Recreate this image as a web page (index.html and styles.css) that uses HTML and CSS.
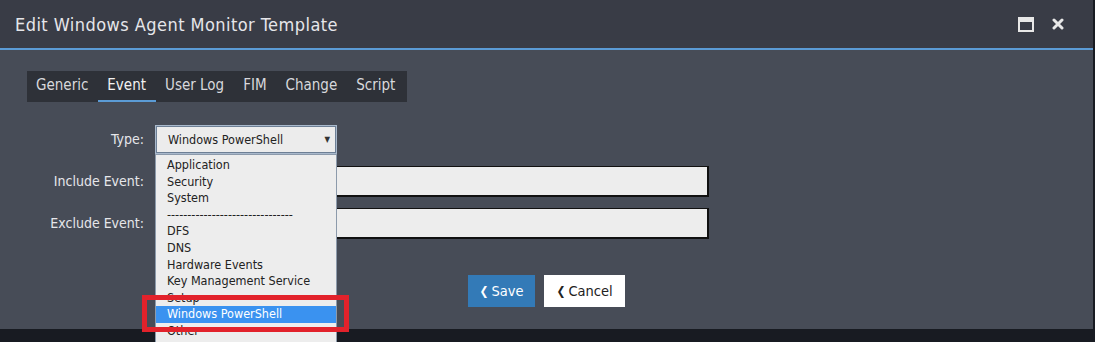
FILE: index.html
```html
<!DOCTYPE html>
<html>
<head>
<meta charset="utf-8">
<link rel="stylesheet" href="styles.css">
</head>
<body>
<div class="modal">
  <div class="modal-header">
    <h1 class="title">Edit Windows Agent Monitor Template</h1>
    <div class="header-icons">
      <svg class="icon-max" width="16" height="15" viewBox="0 0 16 15"><rect x="1" y="1" width="14" height="13" fill="none" stroke="#e8e8e8" stroke-width="2"/><rect x="1" y="1" width="14" height="4" fill="#e8e8e8"/></svg>
      <svg class="icon-close" width="12" height="12" viewBox="0 0 12 12"><path d="M2 2 L10 10 M10 2 L2 10" stroke="#e8e8e8" stroke-width="3" stroke-linecap="round"/></svg>
    </div>
  </div>
  <div class="modal-body">
    <div class="tabs">
      <div class="tab">Generic</div>
      <div class="tab active">Event</div>
      <div class="tab">User Log</div>
      <div class="tab">FIM</div>
      <div class="tab">Change</div>
      <div class="tab">Script</div>
    </div>
    <div class="form">
      <label class="label">Type:</label>
      <div class="select-wrap">
        <div class="select">Windows PowerShell<span class="arrow">▼</span></div>
        <div class="dropdown">
          <div class="opt">Application</div>
          <div class="opt">Security</div>
          <div class="opt">System</div>
          <div class="opt">-------------------------------</div>
          <div class="opt">DFS</div>
          <div class="opt">DNS</div>
          <div class="opt">Hardware Events</div>
          <div class="opt">Key Management Service</div>
          <div class="opt">Setup</div>
          <div class="opt selected">Windows PowerShell</div>
          <div class="opt">Other</div>
        </div>
        <div class="highlight-box"></div>
      </div>
      <label class="label">Include Event:</label>
      <div class="input"></div>
      <label class="label">Exclude Event:</label>
      <div class="input"></div>
    </div>
    <div class="actions">
      <button class="btn btn-save"><span class="chev">&#10094;</span>Save</button>
      <button class="btn btn-cancel"><span class="chev">&#10094;</span>Cancel</button>
    </div>
  </div>
</div>
</body>
</html>
```

FILE: styles.css
```css
html, body {
  margin: 0;
  padding: 0;
}
body {
  background: #181b22;
  width: 1095px;
  height: 342px;
  overflow: hidden;
  font-family: "DejaVu Sans Condensed", "DejaVu Sans", sans-serif;
}
.modal {
  width: 1093px;
  background: #474c57;
}
.modal-header {
  height: 48px;
  background: #393c46;
  border-bottom: 2px solid #5b9bd5;
  display: flex;
  align-items: center;
  justify-content: space-between;
  padding: 0 29px 0 15px;
  box-sizing: content-box;
}
.title {
  margin: 0;
  font-size: 18px;
  font-weight: normal;
  color: #e6e6ea;
  letter-spacing: 0.45px;
}
.header-icons {
  display: flex;
  align-items: center;
  gap: 18px;
}
.modal-body {
  height: 279px;
  padding: 21px 0 0 27px;
  box-sizing: border-box;
  position: relative;
}
.tabs {
  display: inline-flex;
  background: #2e3138;
  height: 31px;
  padding-right: 2px;
}
.tab {
  padding: 0 10px 0 9px;
  line-height: 29px;
  font-size: 15px;
  color: #d8d8dc;
  border-bottom: 2px solid transparent;
}
.tab.active {
  color: #f2f2f2;
  border-bottom-color: #5b9bd5;
}
.form {
  display: grid;
  grid-template-columns: 117px 554px;
  column-gap: 11px;
  row-gap: 11px;
  margin-top: 23px;
  align-items: center;
}
.label {
  text-align: right;
  font-size: 14px;
  color: #e6e6ea;
  margin-top: -2px;
}
.select-wrap {
  position: relative;
  height: 29px;
  margin-bottom: 1px;
}
.select {
  width: 182px;
  height: 29px;
  box-sizing: border-box;
  border: 1px solid #a9b9cc;
  box-shadow: inset 0 0 0 1px #6d7f95;
  background: #ececec;
  font-size: 12.5px;
  color: #222;
  line-height: 27px;
  padding-left: 12px;
  position: relative;
}
.arrow {
  position: absolute;
  right: 6px;
  top: 0;
  font-size: 8px;
  color: #333;
}
.dropdown {
  position: absolute;
  left: 0;
  top: 29px;
  width: 182px;
  box-sizing: border-box;
  background: #ededed;
  border: 1px solid #8c9aab;
  padding-top: 2px;
  z-index: 5;
  height: 200px;
}
.opt {
  font-size: 12.5px;
  color: #222;
  line-height: 16.6px;
  padding-left: 11px;
  white-space: nowrap;
}
.opt.selected {
  background: #3a92f0;
  color: #fff;
}
.highlight-box {
  position: absolute;
  left: -13px;
  top: 170px;
  width: 207px;
  height: 37px;
  box-sizing: border-box;
  border: 5px solid #e2222b;
  z-index: 6;
}
.input {
  height: 31px;
  box-sizing: border-box;
  border: 1px solid #111;
  border-width: 1px 2px 2px 1px;
  background: #ededed;
}
.actions {
  display: flex;
  justify-content: center;
  gap: 9px;
  margin-top: 36px;
  margin-left: -27px;
}
.btn {
  height: 32px;
  border: none;
  font-family: "DejaVu Sans Condensed", "DejaVu Sans", sans-serif;
  font-size: 14.5px;
  padding: 0 10px;
  display: flex;
  align-items: center;
  gap: 3px;
}
.btn-save {
  width: 67px;
  background: #337ab7;
  color: #fff;
  justify-content: center;
}
.btn-cancel {
  width: 81px;
  background: #fff;
  color: #222;
  justify-content: center;
}
.chev {
  font-size: 12px;
  font-weight: bold;
}
```
